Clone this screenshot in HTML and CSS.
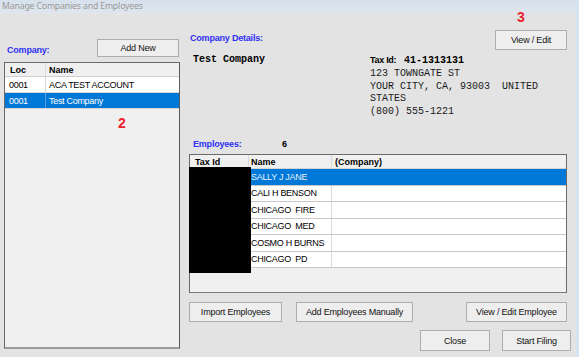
FILE: index.html
```html
<!DOCTYPE html>
<html>
<head>
<meta charset="utf-8">
<link rel="stylesheet" href="styles.css">
</head>
<body>
<div class="app">
  <div class="titlebar">Manage Companies and Employees</div>
  <div class="main">
    <div class="left">
      <div class="left-head">
        <span class="label">Company:</span>
        <button class="btn btn-add">Add New</button>
      </div>
      <div class="list">
        <div class="lrow lhead"><div class="c-loc">Loc</div><div class="c-name">Name</div></div>
        <div class="lrow"><div class="c-loc">0001</div><div class="c-name">ACA TEST ACCOUNT</div></div>
        <div class="lrow sel"><div class="c-loc">0001</div><div class="c-name">Test Company</div></div>
        <span class="mark mark2">2</span>
      </div>
    </div>
    <div class="right">
      <div class="right-head">
        <span class="label">Company Details:</span>
        <div class="btn-wrap">
          <span class="mark mark3">3</span>
          <button class="btn btn-view">View / Edit</button>
        </div>
      </div>
      <div class="details">
        <div class="co-name">Test Company</div>
        <div class="co-info">
          <div class="taxline"><span class="taxlbl">Tax Id:</span><span class="taxval">41-1313131</span></div>
          <div class="addr">123 TOWNGATE ST<br>YOUR CITY, CA, 93003&nbsp; UNITED<br>STATES<br>(800) 555-1221</div>
        </div>
      </div>
      <div class="emp-head"><span class="label">Employees:</span><span class="count">6</span></div>
      <div class="table">
        <div class="trow thead"><div class="t1">Tax Id</div><div class="t2">Name</div><div class="t3">(Company)</div></div>
        <div class="trow sel"><div class="t1"></div><div class="t2">SALLY J JANE</div><div class="t3"></div></div>
        <div class="trow"><div class="t1"></div><div class="t2">CALI H BENSON</div><div class="t3"></div></div>
        <div class="trow"><div class="t1"></div><div class="t2">CHICAGO&nbsp; FIRE</div><div class="t3"></div></div>
        <div class="trow"><div class="t1"></div><div class="t2">CHICAGO&nbsp; MED</div><div class="t3"></div></div>
        <div class="trow"><div class="t1"></div><div class="t2">COSMO H BURNS</div><div class="t3"></div></div>
        <div class="trow"><div class="t1"></div><div class="t2">CHICAGO&nbsp; PD</div><div class="t3"></div></div>
        <div class="redact"></div>
      </div>
      <div class="btnrow">
        <button class="btn b-import">Import Employees</button>
        <button class="btn b-manual">Add Employees Manually</button>
        <button class="btn b-vee">View / Edit Employee</button>
      </div>
      <div class="btnrow2">
        <button class="btn b-close">Close</button>
        <button class="btn b-start">Start Filing</button>
      </div>
    </div>
    <div class="edge"></div>
  </div>
</div>
</body>
</html>
```

FILE: styles.css
```css
* { box-sizing: border-box; }
html, body { margin: 0; padding: 0; }
body {
  width: 579px; height: 357px; overflow: hidden;
  background: #e3e3e3;
  font-family: "Liberation Sans", Arial, sans-serif;
  font-size: 9px; color: #000;
}
.app { width: 579px; height: 357px; display: flex; flex-direction: column; }
.titlebar {
  height: 14px; flex: none;
  background: linear-gradient(#d6e1ed, #e0e6ec);
  color: #999999;
  font-family: "Noto Sans", "Open Sans", sans-serif;
  font-size: 8.7px; line-height: 12px;
  padding-left: 2px; letter-spacing: -0.15px;
}
.main { flex: 1; display: flex; position: relative; }
.edge { position: absolute; right: 0; top: -14px; bottom: 0; width: 3px; background: #d5e3f2; }
.label { color: #2f30f5; font-weight: bold; letter-spacing: -0.2px; }
.btn {
  font-family: "Liberation Sans", Arial, sans-serif;
  font-size: 9px; letter-spacing: -0.2px; color: #111;
  background: #eeeeee; border: 1px solid #adadad; padding: 0; margin: 0;
  display: flex; align-items: center; justify-content: center;
}

/* left */
.left { width: 176px; margin-left: 4px; padding-top: 25px; display: flex; flex-direction: column; }
.left-head { height: 18px; display: flex; align-items: flex-end; justify-content: space-between; }
.left-head .label { margin-left: 3px; line-height: 10px; margin-bottom: 2px; }
.btn-add { width: 82px; height: 18px; margin-right: 1px; }
.list {
  margin-top: 5px; height: 287px; position: relative;
  background: #f0f0f0;
  border: 1px solid #6a6a6a; border-bottom: 2px solid #9a9a9a; border-right-color: #5a5a5a;
}
.lrow { display: flex; height: 16px; align-items: center; background: #fff; border-bottom: 1px solid #d6d6d6; letter-spacing: -0.3px; }
.lrow .c-loc { width: 41px; padding-left: 4px; height: 100%; display: flex; align-items: center; border-right: 1px solid #d6d6d6; }
.lrow .c-name { padding-left: 3px; }
.lrow.lhead { height: 14px; background: #f0f0f0; font-weight: bold; border-bottom: 1px solid #cfcfcf; letter-spacing: 0; }
.lrow.lhead .c-loc { padding-left: 5px; border-right-color: #dcdcdc; }
.lrow.sel { background: #0078d7; color: #fff; }
.lrow.sel .c-loc { border-right-color: #5aa0dc; }
.mark { position: absolute; color: #ee1d2c; font-weight: bold; font-size: 14px; font-family: "Liberation Sans", Arial, sans-serif; }
.mark2 { left: 113px; top: 52px; }

/* right */
.right { width: 382px; margin-left: 9px; display: flex; flex-direction: column; }
.right-head { height: 36px; display: flex; justify-content: space-between; align-items: flex-end; padding-right: 4px; }
.right-head .label { margin-left: 1px; align-self: flex-start; margin-top: 19px; }
.btn-wrap { position: relative; }
.btn-view { width: 72px; height: 20px; }
.mark3 { left: 22px; top: -21px; }
.details { display: flex; margin-top: 4px; height: 76px; font-family: "Liberation Mono", "Courier New", monospace; font-size: 10px; }
.co-name { width: 181px; padding-left: 4px; font-weight: bold; line-height: 12px; }
.co-info { display: flex; flex-direction: column; }
.taxline { height: 12px; display: flex; align-items: center; }
.taxlbl { font-family: "Liberation Sans", Arial, sans-serif; font-size: 9px; font-weight: bold; letter-spacing: -0.3px; width: 34px; }
.taxval { font-weight: bold; }
.addr { margin-top: 2px; line-height: 12.5px; color: #1a1a1a; }
.emp-head { height: 10px; margin-top: 9px; display: flex; align-items: center; }
.emp-head .label { width: 89px; margin-left: 4px; }
.count { font-weight: bold; }
.table {
  margin-top: 5px; width: 378px; height: 139px; position: relative;
  background: #f0f0f0; border: 1px solid #6a6a6a; border-bottom-color: #7a7a7a;
}
.trow { display: flex; height: 16.5px; background: #fff; border-bottom: 1px solid #c8c8c8; letter-spacing: -0.3px; }
.trow > div { display: flex; align-items: center; height: 100%; }
.t1 { width: 59px; border-right: 1px solid #dadada; padding-left: 5px; }
.t2 { width: 83px; border-right: 1px solid #dadada; padding-left: 2px; }
.t3 { flex: 1; padding-left: 3px; }
.trow.thead { height: 14px; background: #f0f0f0; font-weight: bold; border-bottom: 1px solid #d4d4d4; letter-spacing: 0; }
.trow.sel { background: #0078d7; color: #e8f2fb; }
.trow.sel .t2 { border-right-color: #0078d7; }
.redact { position: absolute; left: -1px; top: 12px; width: 62px; height: 106px; background: #000; }
.btnrow { display: flex; margin-top: 9px; height: 20px; padding-right: 4px; }
.b-import { width: 93px; }
.b-manual { width: 117px; margin-left: 14px; }
.b-vee { width: 101px; margin-left: auto; }
.btnrow2 { display: flex; justify-content: flex-end; margin-top: 8px; height: 21px; }
.b-close { width: 70px; }
.b-start { width: 69px; margin-left: 12px; }
```
